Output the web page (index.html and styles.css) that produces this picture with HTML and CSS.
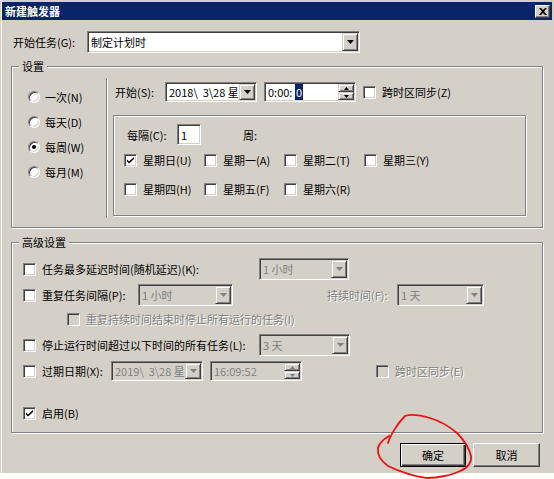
FILE: index.html
```html
<!DOCTYPE html>
<html lang="zh-CN">
<head>
<meta charset="utf-8">
<title>新建触发器</title>
<link rel="stylesheet" href="styles.css">
</head>
<body>
<div class="window">
  <div class="titlebar">
    <span class="title">新建触发器</span>
    <span class="closebtn"><svg width="8" height="7" viewBox="0 0 8 7"><path d="M0 0h2l2 2 2-2h2L5 3.5 8 7H6L4 5 2 7H0l3-3.5z" fill="#000"/></svg></span>
  </div>
  <div class="content">
    <div class="toprow">
      <span class="toplabel">开始任务(G):</span>
      <div class="combo combo-top">
        <span class="ctext">制定计划时</span>
        <span class="cbtn"><svg width="7" height="4" viewBox="0 0 7 4"><polygon points="0,0 7,0 3.5,4" fill="#000"/></svg></span>
      </div>
    </div>

    <div class="group group1">
      <span class="legend">设置</span>
      <div class="radios">
        <div class="radio-row"><span class="radio"></span><span>一次(N)</span></div>
        <div class="radio-row"><span class="radio"></span><span>每天(D)</span></div>
        <div class="radio-row"><span class="radio on"></span><span>每周(W)</span></div>
        <div class="radio-row"><span class="radio"></span><span>每月(M)</span></div>
      </div>
      <div class="vsep"></div>
      <div class="schedule">
        <div class="startrow">
          <span class="startlabel">开始(S):</span>
          <div class="combo combo-date">
            <span class="ctext">2018\  3\28 星</span>
            <span class="cbtn"><svg width="7" height="4" viewBox="0 0 7 4"><polygon points="0,0 7,0 3.5,4" fill="#000"/></svg></span>
          </div>
          <div class="spin spin-time">
            <span class="ctext">0:00: <span class="sel">0</span></span>
            <span class="spinbtns">
              <span class="sbtn"><svg width="5" height="3" viewBox="0 0 5 3"><polygon points="2.5,0 5,3 0,3" fill="#000"/></svg></span>
              <span class="sbtn"><svg width="5" height="3" viewBox="0 0 5 3"><polygon points="0,0 5,0 2.5,3" fill="#000"/></svg></span>
            </span>
          </div>
          <span class="check check-tz"></span>
          <span class="cblabel">跨时区同步(Z)</span>
        </div>
        <div class="innerbox">
          <div class="intervalrow">
            <span class="intlabel">每隔(C):</span>
            <span class="edit">1</span>
            <span class="weeklabel">周:</span>
          </div>
          <div class="dayrow first">
            <div class="day"><span class="check on"><svg width="7" height="7" viewBox="0 0 7 7"><path d="M0 2.5l2 2 5-4.5v2l-5 4.5-2-2z" fill="#000"/></svg></span><span>星期日(U)</span></div>
            <div class="day"><span class="check"></span><span>星期一(A)</span></div>
            <div class="day"><span class="check"></span><span>星期二(T)</span></div>
            <div class="day"><span class="check"></span><span>星期三(Y)</span></div>
          </div>
          <div class="dayrow second">
            <div class="day"><span class="check"></span><span>星期四(H)</span></div>
            <div class="day"><span class="check"></span><span>星期五(F)</span></div>
            <div class="day"><span class="check"></span><span>星期六(R)</span></div>
          </div>
        </div>
      </div>
    </div>

    <div class="group group2">
      <span class="legend">高级设置</span>
      <div class="arow r1">
        <span class="check"></span>
        <span class="alabel w-delay">任务最多延迟时间(随机延迟)(K):</span>
        <div class="combo dis w90">
          <span class="ctext">1 小时</span>
          <span class="cbtn"><svg width="7" height="4" viewBox="0 0 7 4"><polygon points="0,0 7,0 3.5,4" fill="#808080"/></svg></span>
        </div>
      </div>
      <div class="arow r2">
        <span class="check"></span>
        <span class="alabel w-repeat">重复任务间隔(P):</span>
        <div class="combo dis w95">
          <span class="ctext">1 小时</span>
          <span class="cbtn"><svg width="7" height="4" viewBox="0 0 7 4"><polygon points="0,0 7,0 3.5,4" fill="#808080"/></svg></span>
        </div>
        <span class="alabel distext w-dur">持续时间(F):</span>
        <div class="combo dis w87">
          <span class="ctext">1 天</span>
          <span class="cbtn"><svg width="7" height="4" viewBox="0 0 7 4"><polygon points="0,0 7,0 3.5,4" fill="#808080"/></svg></span>
        </div>
      </div>
      <div class="arow r3">
        <span class="check dis"></span>
        <span class="cblabel distext">重复持续时间结束时停止所有运行的任务(I)</span>
      </div>
      <div class="arow r4">
        <span class="check"></span>
        <span class="alabel w-delay">停止运行时间超过以下时间的所有任务(L):</span>
        <div class="combo dis w91">
          <span class="ctext">3 天</span>
          <span class="cbtn"><svg width="7" height="4" viewBox="0 0 7 4"><polygon points="0,0 7,0 3.5,4" fill="#808080"/></svg></span>
        </div>
      </div>
      <div class="arow r5">
        <span class="check"></span>
        <span class="alabel w-exp">过期日期(X):</span>
        <div class="combo dis w92">
          <span class="ctext">2019\  3\28 星</span>
          <span class="cbtn"><svg width="7" height="4" viewBox="0 0 7 4"><polygon points="0,0 7,0 3.5,4" fill="#808080"/></svg></span>
        </div>
        <div class="spin dis spin-exp">
          <span class="ctext">16:09:52</span>
          <span class="spinbtns">
            <span class="sbtn"><svg width="5" height="3" viewBox="0 0 5 3"><polygon points="2.5,0 5,3 0,3" fill="#808080"/></svg></span>
            <span class="sbtn"><svg width="5" height="3" viewBox="0 0 5 3"><polygon points="0,0 5,0 2.5,3" fill="#808080"/></svg></span>
          </span>
        </div>
        <span class="check dis check-etz"></span>
        <span class="cblabel distext">跨时区同步(E)</span>
      </div>
      <div class="arow r6">
        <span class="check on"><svg width="7" height="7" viewBox="0 0 7 7"><path d="M0 2.5l2 2 5-4.5v2l-5 4.5-2-2z" fill="#000"/></svg></span>
        <span class="cblabel">启用(B)</span>
      </div>
    </div>

    <div class="buttons">
      <span class="button default"><span>确定</span></span>
      <span class="button cancel"><span>取消</span></span>
    </div>
  </div>
</div>
<svg class="annotation" width="554" height="479" viewBox="0 0 554 479">
  <path d="M388 443 C390 436 397 424 405 416 C410 414 420 415 430 418 C440 421 450 427 457 433 C463 439 469 448 471 456 C472 462 468 468 460 471 C452 475 438 478 427 478 C417 477 400 472 388 466 C381 461 377 455 378 448 C379 443 384 439 389 436" fill="none" stroke="#f01010" stroke-width="1.8" stroke-linecap="round"/>
</svg>
</body>
</html>
```

FILE: styles.css
```css
* { box-sizing: border-box; }

body {
  margin: 0;
  background: #fff;
  font-family: "Noto Sans CJK SC", "Liberation Sans", sans-serif;
  font-size: 11px;
  color: #000;
  position: relative;
  width: 554px;
  height: 479px;
  overflow: hidden;
}

.window {
  width: 554px;
  height: 473px;
  background: #d4d0c8;
  padding: 2px 2px 0 2px;
  box-shadow: inset 1px 0 0 #d4d0c8, inset 2px 0 0 #f4f3ef;
}

.titlebar {
  height: 18px;
  background: #0a246a;
  color: #fff;
  font-weight: bold;
  display: flex;
  align-items: center;
  justify-content: space-between;
  padding: 0 2px 0 3px;
}

.title { line-height: 18px; }

.closebtn {
  width: 15px;
  height: 13px;
  background: #d4d0c8;
  border: 1px solid;
  border-color: #fff #404040 #404040 #fff;
  box-shadow: inset -1px -1px 0 #808080;
  display: flex;
  align-items: center;
  justify-content: center;
}

.content { padding: 0 9px; }

.toprow {
  display: flex;
  align-items: center;
  margin-top: 11px;
  height: 22px;
}
.toplabel { width: 76px; padding-left: 2px; }

/* combobox */
.combo, .spin, .edit {
  display: flex;
  align-items: stretch;
  height: 20px;
  background: #fff;
  border: 1px solid;
  border-color: #808080 #fff #fff #808080;
  box-shadow: inset 1px 1px 0 #404040, inset -1px -1px 0 #d4d0c8;
  padding: 1px;
  overflow: hidden;
}
.combo-top { width: 273px; height: 22px; }
.ctext {
  flex: 1;
  padding-left: 2px;
  white-space: pre;
  overflow: hidden;
  display: flex;
  align-items: center;
  line-height: 16px;
}
.cbtn {
  width: 16px;
  flex: none;
  background: #d4d0c8;
  border: 1px solid;
  border-color: #d4d0c8 #404040 #404040 #d4d0c8;
  box-shadow: inset 1px 1px 0 #fff, inset -1px -1px 0 #808080;
  display: flex;
  align-items: center;
  justify-content: center;
}
.combo.dis, .spin.dis { background: #d4d0c8; color: #808080; }

.spinbtns { width: 16px; flex: none; display: flex; flex-direction: column; }
.sbtn {
  flex: 1;
  background: #d4d0c8;
  border: 1px solid;
  border-color: #d4d0c8 #404040 #404040 #d4d0c8;
  box-shadow: inset 1px 1px 0 #fff, inset -1px -1px 0 #808080;
  display: flex;
  align-items: center;
  justify-content: center;
}
.sel { background: #0a246a; color: #fff; padding: 0 1px; }

/* checkbox & radio */
.check {
  width: 13px;
  height: 13px;
  flex: none;
  background: #fff;
  border: 1px solid;
  border-color: #808080 #fff #fff #808080;
  box-shadow: inset 1px 1px 0 #404040, inset -1px -1px 0 #d4d0c8;
  display: flex;
  align-items: center;
  justify-content: center;
}
.check.dis { background: #d4d0c8; }
.radio {
  width: 12px;
  height: 12px;
  flex: none;
  border-radius: 50%;
  background: #fff;
  border: 1px solid;
  border-color: #808080 #fff #fff #808080;
  box-shadow: inset 1px 1px 0 #404040, inset -1px -1px 0 #d4d0c8;
  display: flex;
  align-items: center;
  justify-content: center;
}
.radio.on::after {
  content: "";
  width: 4px;
  height: 4px;
  border-radius: 50%;
  background: #000;
}
.cblabel { margin-left: 6px; white-space: nowrap; }
.distext { color: #808080; text-shadow: 1px 1px 0 #fff; }

/* groups */
.group {
  position: relative;
  border: 1px solid #808080;
  box-shadow: 1px 1px 0 #fff, inset 1px 1px 0 #fff;
}
.legend {
  position: absolute;
  top: -9px;
  left: 7px;
  padding: 0 3px;
  background: #d4d0c8;
  line-height: 16px;
}
.group1 { margin-top: 13px; height: 162px; display: flex; }
.radios { width: 94px; padding: 17px 0 0 16px; }
.radio-row { height: 25px; display: flex; align-items: center; gap: 5px; }
.vsep {
  width: 2px;
  margin: 11px 0 9px;
  border-left: 1px solid #808080;
  border-right: 1px solid #fff;
}
.schedule { padding: 15px 0 0 5px; }
.startrow { display: flex; align-items: center; height: 20px; padding-left: 2px; }
.startlabel { width: 50px; }
.combo-date { width: 92px; }
.spin-time { width: 92px; margin-left: 7px; }
.check-tz { margin-left: 7px; }

.innerbox {
  margin-top: 13px;
  width: 413px;
  height: 101px;
  border: 1px solid #808080;
  box-shadow: 1px 1px 0 #fff, inset 1px 1px 0 #fff;
}
.intervalrow {
  display: flex;
  align-items: center;
  height: 21px;
  margin-top: 8px;
  padding-left: 13px;
}
.intlabel { width: 50px; }
.edit { width: 24px; height: 21px; padding-left: 3px; align-items: center; }
.weeklabel { margin-left: 42px; }
.dayrow { display: flex; align-items: center; height: 20px; padding-left: 10px; }
.dayrow.first { margin-top: 5px; }
.dayrow.second { margin-top: 9px; }
.day { width: 80px; display: flex; align-items: center; gap: 6px; white-space: nowrap; }

.group2 { margin-top: 14px; height: 191px; }
.arow { display: flex; align-items: center; height: 22px; padding-left: 11px; }
.arow.r1 { margin-top: 15px; }
.arow.r2 { margin-top: 4px; }
.arow.r3 { margin-top: 2px; padding-left: 55px; }
.arow.r4 { margin-top: 4px; }
.arow.r5 { margin-top: 4px; }
.arow.r6 { margin-top: 20px; }
.alabel { margin-left: 6px; white-space: nowrap; }
.w-delay { width: 217px; flex: none; }
.w-repeat { width: 96px; flex: none; }
.w-dur { width: 70px; flex: none; margin-left: 94px; }
.w-exp { width: 69px; flex: none; }
.w90 { width: 90px; height: 22px; }
.w95 { width: 95px; height: 22px; }
.w87 { width: 87px; height: 22px; }
.w91 { width: 91px; height: 22px; }
.w92 { width: 92px; }
.spin-exp { width: 92px; margin-left: 7px; }
.check-etz { margin-left: 74px; }

.buttons {
  display: flex;
  justify-content: flex-end;
  gap: 7px;
  margin-top: 10px;
  padding-right: 3px;
}
.button {
  height: 24px;
  display: flex;
  align-items: center;
  justify-content: center;
  background: #d4d0c8;
  border: 1px solid;
  border-color: #fff #404040 #404040 #fff;
  box-shadow: inset -1px -1px 0 #808080;
}
.button.default {
  width: 66px;
  border: 1px solid #000;
  box-shadow: inset 1px 1px 0 #fff, inset -1px -1px 0 #404040, inset -2px -2px 0 #808080;
}
.button.cancel { width: 67px; }

.annotation {
  position: absolute;
  left: 0;
  top: 0;
  pointer-events: none;
}
```
